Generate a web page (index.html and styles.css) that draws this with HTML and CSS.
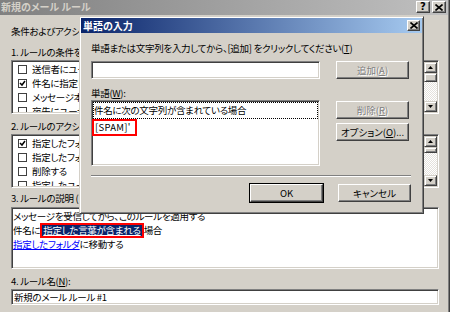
FILE: index.html
```html
<!DOCTYPE html>
<html lang="ja">
  <head>
    <title>新規のメール ルール</title>
    <link rel="stylesheet" href="styles.css">
  </head>
  <body>
    <!-- back window: the rule editor -->
    <div class="window rules">
      <div class="titlebar inactive">
        <span class="title">新規のメール ルール</span>
        <span class="capbtn help">?</span>
        <span class="capbtn close">
          <svg width="8" height="7" viewBox="0 0 8 7"><path d="M0.5 0.5 L7.5 6.5 M7.5 0.5 L0.5 6.5" stroke="#000" stroke-width="1.6"/></svg>
        </span>
      </div>
      <div class="rules-body">
        <p class="label intro">条件およびアクションを選択してから、ルールの説明で値を指定してください。</p>
        <p class="label">1. ルールの条件を選択してください(<u>C</u>):</p>
        <div class="sunken listbox">
          <div class="items">
            <div class="check-row"><span class="cb"></span>送信者にユーザーが含まれる場合</div>
            <div class="check-row"><span class="cb checked"></span>件名に指定した言葉が含まれる場合</div>
            <div class="check-row"><span class="cb"></span>メッセージ本文に指定した言葉が含まれる場合</div>
            <div class="check-row"><span class="cb"></span>宛先にユーザーが含まれる場合</div>
          </div>
          <div class="scrollbar">
            <span class="sbtn up"></span>
            <span class="thumb"></span>
            <span class="track"></span>
            <span class="sbtn down"></span>
          </div>
        </div>
        <p class="label gap-top">2. ルールのアクションを選択してください(<u>A</u>):</p>
        <div class="sunken listbox">
          <div class="items">
            <div class="check-row"><span class="cb checked"></span>指定したフォルダに移動する</div>
            <div class="check-row"><span class="cb"></span>指定したフォルダにコピーする</div>
            <div class="check-row"><span class="cb"></span>削除する</div>
            <div class="check-row"><span class="cb"></span>指定したユーザーに転送する</div>
          </div>
          <div class="scrollbar">
            <span class="sbtn up"></span>
            <span class="thumb small"></span>
            <span class="track"></span>
            <span class="sbtn down"></span>
          </div>
        </div>
        <p class="label gap-top small-gap">3. ルールの説明 (下線の付いた値をクリックして編集します)(<u>D</u>):</p>
        <div class="sunken desc">
          <div>メッセージを受信してから、このルールを適用する</div>
          <div>件名に<span class="mark"><span class="hl">指定した言葉が含まれる</span></span>場合</div>
          <div><span class="link">指定したフォルダ</span>に移動する</div>
        </div>
        <p class="label gap-top">4. ルール名(<u>N</u>):</p>
        <div class="sunken name">新規のメール ルール #1</div>
      </div>
    </div>

    <!-- front window: the word dialog -->
    <div class="window dialog">
      <div class="titlebar active">
        <span class="title">単語の入力</span>
        <span class="capbtn close">
          <svg width="8" height="7" viewBox="0 0 8 7"><path d="M0.5 0.5 L7.5 6.5 M7.5 0.5 L0.5 6.5" stroke="#000" stroke-width="1.6"/></svg>
        </span>
      </div>
      <div class="dialog-body">
        <p class="label">単語または文字列を入力してから、[追加] をクリックしてください(<u>T</u>)</p>
        <div class="dlg-row first">
          <div class="sunken word-input"></div>
          <button class="btn" disabled>追加(<u>A</u>)</button>
        </div>
        <p class="label words">単語(<u>W</u>):</p>
        <div class="dlg-row">
          <div class="sunken word-list">
            <div class="item focus">件名に次の文字列が含まれている場合</div>
            <div class="item"><span class="red-box">[SPAM]'</span></div>
          </div>
          <div class="btn-col">
            <button class="btn" disabled>削除(<u>R</u>)</button>
            <button class="btn">オプション(<u>O</u>)...</button>
          </div>
        </div>
        <div class="separator"></div>
        <div class="actions">
          <span class="default-frame"><button class="btn">OK</button></span>
          <button class="btn">キャンセル</button>
        </div>
      </div>
    </div>
  </body>
</html>
```

FILE: styles.css
```css
body {
  margin: 0;
  width: 450px;
  height: 312px;
  overflow: hidden;
  position: relative;
  background: #d4d0c8;
  font-family: "Noto Sans CJK JP", sans-serif;
  font-size: 9.5px;
  letter-spacing: -0.3px;
  line-height: 14px;
  font-feature-settings: "palt";
  color: #000;
}

p {
  margin: 0;
}

u {
  text-decoration: underline;
}

/* windows */
.window {
  position: absolute;
  box-sizing: border-box;
  background: #d4d0c8;
  border: 1px solid;
  border-color: #d4d0c8 #404040 #404040 #d4d0c8;
  box-shadow: inset 1px 1px #fff, inset -1px -1px #808080;
  padding: 1px;
}

.rules {
  left: -3px;
  top: -3px;
  width: 453px;
  height: 330px;
}

.dialog {
  left: 79px;
  top: 16px;
  width: 345px;
  height: 198px;
}

.titlebar {
  display: flex;
  align-items: center;
  gap: 2px;
  padding: 0 2px 0 2px;
  font-size: 10px;
  letter-spacing: 0;
  font-weight: bold;
  white-space: nowrap;
}

.titlebar .title {
  flex: 1;
}

.inactive {
  height: 16px;
  color: #d4d0c8;
  background: linear-gradient(to right, #808080, #c0c0c0);
}

.active {
  height: 15px;
  color: #fff;
  background: linear-gradient(to right, #0a246a, #a6caf0);
}

.capbtn {
  display: flex;
  align-items: center;
  justify-content: center;
  box-sizing: border-box;
  width: 14px;
  height: 12px;
  background: #d4d0c8;
  border: 1px solid;
  border-color: #fff #404040 #404040 #fff;
  box-shadow: inset -1px -1px #808080;
  color: #000;
  font-family: "DejaVu Sans", sans-serif;
  font-size: 10px;
  line-height: 10px;
}

.dialog .capbtn {
  width: 13px;
  height: 11px;
}

/* sunken fields */
.sunken {
  box-sizing: border-box;
  background: #fff;
  border: 1px solid;
  border-color: #808080 #fff #fff #808080;
  box-shadow: inset 1px 1px #404040, inset -1px -1px #d4d0c8;
  padding: 1px;
}

/* rule editor body */
.rules-body {
  padding: 9px 9px 0 12px;
}

.label {
  white-space: nowrap;
  height: 14px;
}

.intro {
  margin-bottom: 7px;
}

.label + .sunken {
  margin-top: 1px;
}

.gap-top {
  margin-top: 5px;
}

.small-gap {
  margin-top: 3px;
  margin-bottom: 2px;
}

.listbox {
  display: flex;
  height: 54px;
  overflow: hidden;
}

.items {
  flex: 1;
  overflow: hidden;
}

.check-row {
  display: flex;
  align-items: center;
  gap: 5px;
  height: 14px;
  padding-left: 5px;
  white-space: nowrap;
}

.cb {
  box-sizing: border-box;
  flex: none;
  width: 9px;
  height: 9px;
  border: 1px solid #404040;
  background: #fff;
}

.cb.checked {
  background: #fff url("data:image/svg+xml,%3Csvg xmlns='http://www.w3.org/2000/svg' width='7' height='7'%3E%3Cpath d='M1 3 L3 5 L6 1' fill='none' stroke='%23000' stroke-width='1.5'/%3E%3C/svg%3E") no-repeat center;
}

.scrollbar {
  display: flex;
  flex-direction: column;
  width: 13px;
}

.sbtn,
.thumb {
  box-sizing: border-box;
  background: #d4d0c8;
  border: 1px solid;
  border-color: #d4d0c8 #404040 #404040 #d4d0c8;
  box-shadow: inset 1px 1px #fff, inset -1px -1px #808080;
}

.sbtn {
  height: 11px;
  background-repeat: no-repeat;
  background-position: center;
}

.sbtn.up {
  background-image: url("data:image/svg+xml,%3Csvg xmlns='http://www.w3.org/2000/svg' width='5' height='3'%3E%3Cpath d='M2.5 0 L5 3 L0 3Z'/%3E%3C/svg%3E");
}

.sbtn.down {
  background-image: url("data:image/svg+xml,%3Csvg xmlns='http://www.w3.org/2000/svg' width='5' height='3'%3E%3Cpath d='M0 0 L5 0 L2.5 3Z'/%3E%3C/svg%3E");
}

.thumb {
  height: 9px;
}

.thumb.small {
  height: 6px;
}

.track {
  flex: 1;
  background: repeating-conic-gradient(#fff 0 25%, #e4e1dc 0 50%) 0 0 / 2px 2px;
}

.desc {
  height: 62px;
  padding: 1px 0 0 1px;
  white-space: nowrap;
}

.mark {
  display: inline-block;
  vertical-align: top;
  margin: 0 0 -1px 0;
  border: 2px solid #f00;
  line-height: 11px;
}

.hl {
  display: inline-block;
  padding: 0 1px;
  background: #0a246a;
  color: #fff;
  text-decoration: underline;
}

.link {
  color: #00f;
  text-decoration: underline;
}

.name {
  height: 16px;
  line-height: 12px;
  padding-left: 2px;
}

/* word dialog body */
.dialog-body {
  padding: 8px 11px 0 10px;
}

.dlg-row {
  display: flex;
  gap: 16px;
}

.dlg-row.first {
  margin-top: 6px;
}

.words {
  margin-top: 7px;
}

.word-input {
  width: 229px;
  height: 18px;
}

.word-list {
  width: 229px;
  height: 66px;
  padding: 1px;
}

.item {
  height: 17px;
  line-height: 15px;
  white-space: nowrap;
  box-sizing: border-box;
}

.item.focus {
  border: 1px dotted #000;
}

.red-box {
  display: inline-block;
  border: 2px solid #f00;
  line-height: 13px;
  letter-spacing: 0.3px;
  padding: 0 4px 0 1px;
  margin-left: -1px;
}

.btn-col {
  display: flex;
  flex-direction: column;
  gap: 4px;
  padding-top: 1px;
}

.btn {
  box-sizing: border-box;
  width: 73px;
  height: 18px;
  padding: 0;
  background: #d4d0c8;
  border: 1px solid;
  border-color: #fff #404040 #404040 #fff;
  box-shadow: inset -1px -1px #808080;
  font: inherit;
  line-height: 14px;
  color: #000;
}

.btn:disabled {
  color: #808080;
  text-shadow: 1px 1px #fff;
}

.separator {
  margin-top: 9px;
  height: 0;
  border-top: 1px solid #808080;
  border-bottom: 1px solid #fff;
}

.actions {
  display: flex;
  justify-content: flex-end;
  align-items: center;
  gap: 14px;
  margin-top: 6px;
}

.default-frame {
  display: flex;
  border: 1px solid #000;
}
```
